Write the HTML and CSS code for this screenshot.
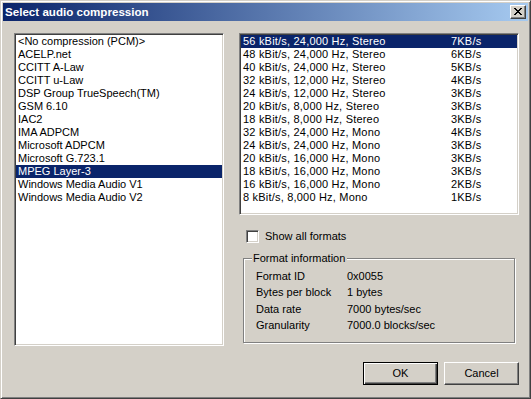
FILE: index.html
```html
<!DOCTYPE html>
<html>
<head>
<meta charset="utf-8">
<link rel="stylesheet" href="styles.css">
</head>
<body>
<div class="window">
  <div class="titlebar">
    <span class="title">Select audio compression</span>
    <span class="closebtn"><svg width="8" height="7" viewBox="0 0 8 7"><path d="M0 0h2v1h1v1h2v-1h1v-1h2v1h-1v1h-1v1h-1v1h1v1h1v1h1v1h-2v-1h-1v-1h-2v1h-1v1h-2v-1h1v-1h1v-1h1v-1h-1v-1h-1v-1h-1z" fill="#000"/></svg></span>
  </div>
  <div class="content">
    <div class="main">
      <div class="list left">
        <div class="row">&lt;No compression (PCM)&gt;</div>
        <div class="row">ACELP.net</div>
        <div class="row">CCITT A-Law</div>
        <div class="row">CCITT u-Law</div>
        <div class="row">DSP Group TrueSpeech(TM)</div>
        <div class="row">GSM 6.10</div>
        <div class="row">IAC2</div>
        <div class="row">IMA ADPCM</div>
        <div class="row">Microsoft ADPCM</div>
        <div class="row">Microsoft G.723.1</div>
        <div class="row sel">MPEG Layer-3</div>
        <div class="row">Windows Media Audio V1</div>
        <div class="row">Windows Media Audio V2</div>
      </div>
      <div class="rightcol">
        <div class="list formats">
          <div class="row sel"><span class="c1">56 kBit/s, 24,000 Hz, Stereo</span><span>7KB/s</span></div>
          <div class="row"><span class="c1">48 kBit/s, 24,000 Hz, Stereo</span><span>6KB/s</span></div>
          <div class="row"><span class="c1">40 kBit/s, 24,000 Hz, Stereo</span><span>5KB/s</span></div>
          <div class="row"><span class="c1">32 kBit/s, 12,000 Hz, Stereo</span><span>4KB/s</span></div>
          <div class="row"><span class="c1">24 kBit/s, 12,000 Hz, Stereo</span><span>3KB/s</span></div>
          <div class="row"><span class="c1">20 kBit/s, 8,000 Hz, Stereo</span><span>3KB/s</span></div>
          <div class="row"><span class="c1">18 kBit/s, 8,000 Hz, Stereo</span><span>3KB/s</span></div>
          <div class="row"><span class="c1">32 kBit/s, 24,000 Hz, Mono</span><span>4KB/s</span></div>
          <div class="row"><span class="c1">24 kBit/s, 24,000 Hz, Mono</span><span>3KB/s</span></div>
          <div class="row"><span class="c1">20 kBit/s, 16,000 Hz, Mono</span><span>3KB/s</span></div>
          <div class="row"><span class="c1">18 kBit/s, 16,000 Hz, Mono</span><span>3KB/s</span></div>
          <div class="row"><span class="c1">16 kBit/s, 16,000 Hz, Mono</span><span>2KB/s</span></div>
          <div class="row"><span class="c1">8 kBit/s, 8,000 Hz, Mono</span><span>1KB/s</span></div>
        </div>
        <div class="checkrow"><span class="checkbox"></span><span class="checklabel">Show all formats</span></div>
        <div class="group">
          <div class="legend">Format information</div>
          <div class="info">
            <div class="irow"><span class="lbl">Format ID</span><span>0x0055</span></div>
            <div class="irow"><span class="lbl">Bytes per block</span><span>1 bytes</span></div>
            <div class="irow"><span class="lbl">Data rate</span><span>7000 bytes/sec</span></div>
            <div class="irow"><span class="lbl">Granularity</span><span>7000.0 blocks/sec</span></div>
          </div>
        </div>
      </div>
    </div>
    <div class="buttons">
      <div class="btn default"><span>OK</span></div>
      <div class="btn"><span>Cancel</span></div>
    </div>
  </div>
</div>
</body>
</html>
```
FILE: styles.css
```css
html, body {
  margin: 0;
  padding: 0;
  background: #d4d0c8;
}
body {
  font-family: "Liberation Sans", Arial, sans-serif;
  font-size: 11px;
  color: #000;
}
.window {
  width: 531px;
  height: 399px;
  box-sizing: border-box;
  background: #d4d0c8;
  border: 1px solid;
  border-color: #d4d0c8 #404040 #404040 #d4d0c8;
  box-shadow: inset 1px 1px 0 #fff, inset -1px -1px 0 #808080;
  padding: 2px;
}
.titlebar {
  height: 18px;
  background: linear-gradient(to right, #0a246a, #a6caf0);
  display: flex;
  align-items: center;
  justify-content: space-between;
  padding: 0 2px 0 2px;
}
.title {
  color: #fff;
  font-weight: bold;
  font-size: 11.6px;
  line-height: 18px;
}
.closebtn {
  width: 16px;
  height: 14px;
  box-sizing: border-box;
  background: #d4d0c8;
  border: 1px solid;
  border-color: #fff #404040 #404040 #fff;
  box-shadow: inset -1px -1px 0 #808080;
  display: flex;
  align-items: center;
  justify-content: center;
  padding: 0 1px 1px 0;
}
.closebtn svg { display: block; }
.content {
  padding: 12px 9px 0 11px;
}
.main {
  display: flex;
  gap: 15px;
  height: 313px;
}
.list {
  box-sizing: border-box;
  background: #fff;
  border: 1px solid;
  border-color: #808080 #fff #fff #808080;
  box-shadow: inset 1px 1px 0 #404040, inset -1px -1px 0 #d4d0c8;
  padding: 1px;
  overflow: hidden;
}
.left {
  width: 210px;
  height: 313px;
}
.row {
  height: 13px;
  line-height: 13px;
  padding-left: 2px;
  white-space: nowrap;
  display: flex;
}
.row.sel {
  background: #0a246a;
  color: #fff;
}
.rightcol {
  width: 280px;
  display: flex;
  flex-direction: column;
}
.formats {
  height: 182px;
}
.formats .row {
  letter-spacing: 0.2px;
}
.c1 {
  width: 208px;
  flex: none;
}
.checkrow {
  margin-top: 15px;
  margin-left: 7px;
  height: 13px;
  display: flex;
  align-items: center;
}
.checkbox {
  width: 13px;
  height: 13px;
  box-sizing: border-box;
  background: #fff;
  border: 1px solid;
  border-color: #808080 #fff #fff #808080;
  box-shadow: inset 1px 1px 0 #404040, inset -1px -1px 0 #d4d0c8;
}
.checklabel {
  margin-left: 6px;
  line-height: 13px;
}
.group {
  margin-top: 15px;
  margin-left: 4px;
  width: 272px;
  height: 85px;
  box-sizing: border-box;
  border: 1px solid #808080;
  box-shadow: 1px 1px 0 #fff, inset 1px 1px 0 #fff;
}
.legend {
  width: max-content;
  margin: -7px 0 0 8px;
  padding: 0 2px 0 1px;
  background: #d4d0c8;
  line-height: 13px;
}
.info {
  padding: 3px 0 0 12px;
}
.irow {
  display: flex;
  height: 16.4px;
  line-height: 16px;
}
.lbl {
  width: 91px;
}
.buttons {
  margin-top: 16px;
  display: flex;
  justify-content: flex-end;
  gap: 6px;
}
.btn {
  width: 75px;
  height: 23px;
  box-sizing: border-box;
  background: #d4d0c8;
  border: 1px solid;
  border-color: #fff #404040 #404040 #fff;
  box-shadow: inset -1px -1px 0 #808080;
  display: flex;
  align-items: center;
  justify-content: center;
  line-height: 13px;
}
.btn.default {
  border: 1px solid #000;
  box-shadow: inset 1px 1px 0 #fff, inset -1px -1px 0 #404040, inset -2px -2px 0 #808080;
}
```
